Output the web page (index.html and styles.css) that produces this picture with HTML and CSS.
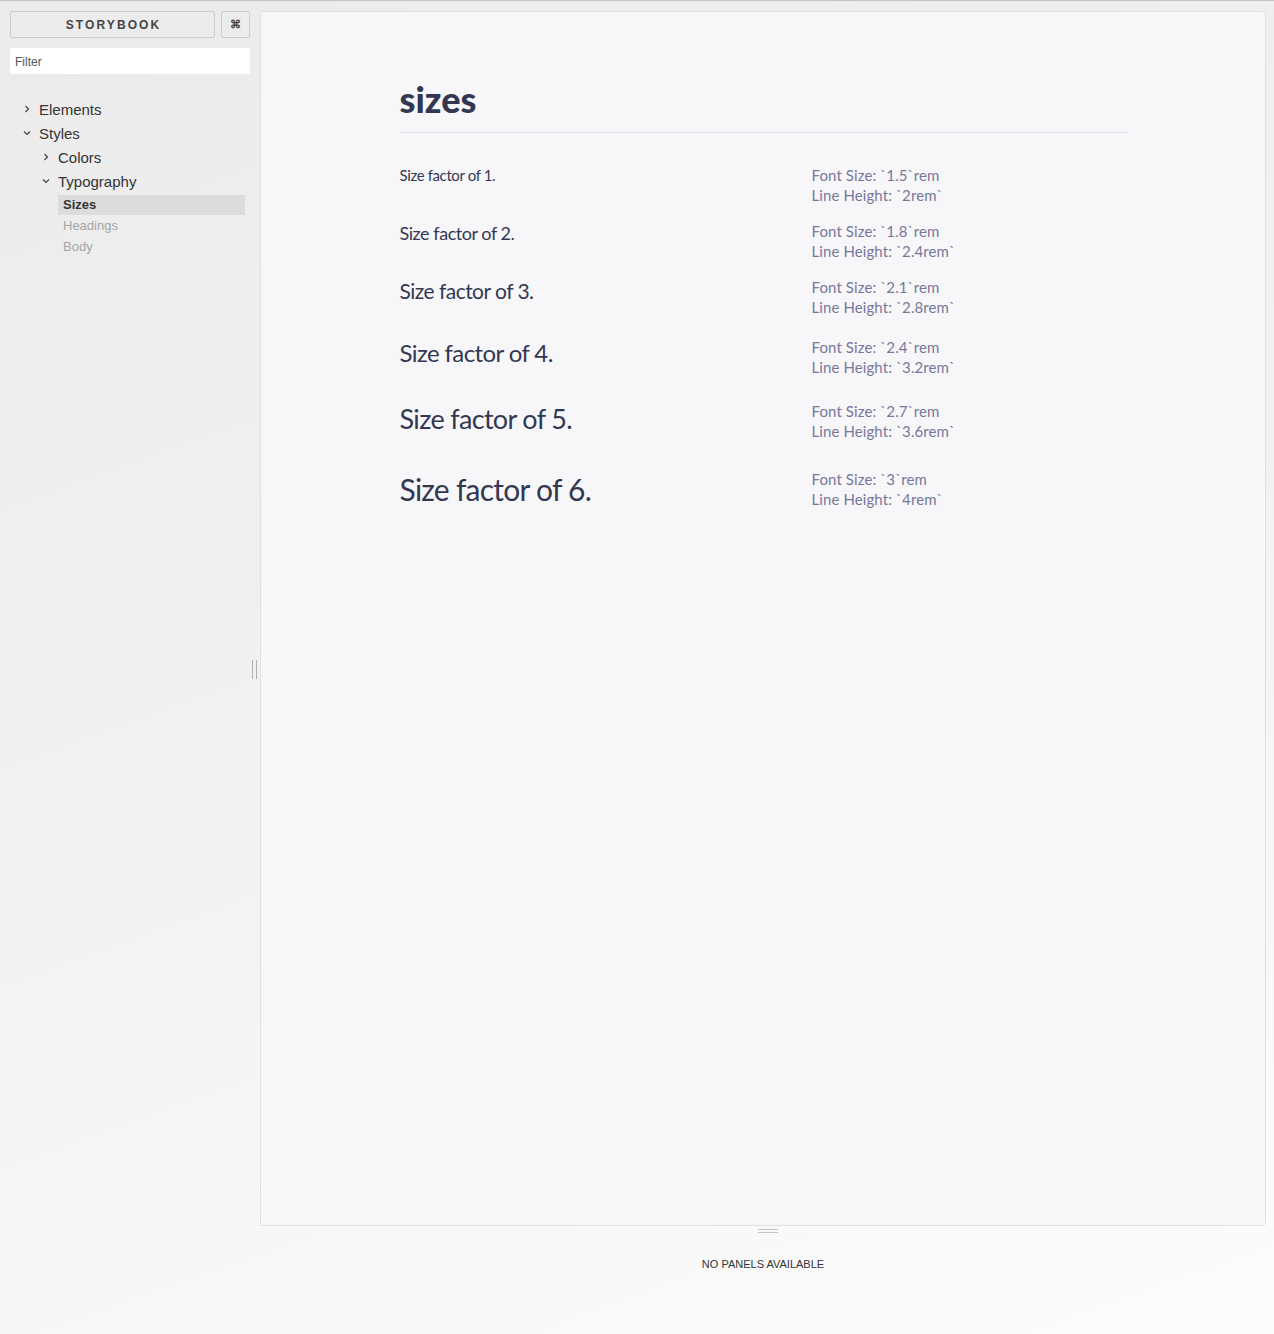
FILE: index.html
```html
<!DOCTYPE html>
<html lang="en">
<head>
  <meta charset="UTF-8">
  <title>Storybook</title>
  <link rel="stylesheet" href="styles.css">
</head>
<body>
  <div class="app">
    <aside class="sidebar">
      <div class="header">
        <button class="brand">STORYBOOK</button>
        <button class="shortcuts">⌘</button>
      </div>
      <input class="filter" type="text" placeholder="Filter">

      <ul class="tree">
        <li class="node">
          <svg class="chev" viewBox="0 0 8 8"><polyline points="2.5,1 5.5,4 2.5,7"/></svg>
          <span>Elements</span>
        </li>
        <li class="node">
          <svg class="chev" viewBox="0 0 8 8"><polyline points="1,2.5 4,5.5 7,2.5"/></svg>
          <span>Styles</span>
        </li>
        <li class="node level-2">
          <svg class="chev" viewBox="0 0 8 8"><polyline points="2.5,1 5.5,4 2.5,7"/></svg>
          <span>Colors</span>
        </li>
        <li class="node level-2">
          <svg class="chev" viewBox="0 0 8 8"><polyline points="1,2.5 4,5.5 7,2.5"/></svg>
          <span>Typography</span>
        </li>
        <li class="story active">Sizes</li>
        <li class="story">Headings</li>
        <li class="story">Body</li>
      </ul>
      <div class="v-handle"></div>
    </aside>

    <main class="main">
      <div class="preview">
        <div class="content">
          <h1>sizes</h1>
          <div class="size-row">
            <div class="sample s1">Size factor of 1.</div>
            <div class="meta">Font Size: `1.5`rem<br>Line Height: `2rem`</div>
          </div>
          <div class="size-row">
            <div class="sample s2">Size factor of 2.</div>
            <div class="meta">Font Size: `1.8`rem<br>Line Height: `2.4rem`</div>
          </div>
          <div class="size-row">
            <div class="sample s3">Size factor of 3.</div>
            <div class="meta">Font Size: `2.1`rem<br>Line Height: `2.8rem`</div>
          </div>
          <div class="size-row">
            <div class="sample s4">Size factor of 4.</div>
            <div class="meta">Font Size: `2.4`rem<br>Line Height: `3.2rem`</div>
          </div>
          <div class="size-row">
            <div class="sample s5">Size factor of 5.</div>
            <div class="meta">Font Size: `2.7`rem<br>Line Height: `3.6rem`</div>
          </div>
          <div class="size-row">
            <div class="sample s6">Size factor of 6.</div>
            <div class="meta">Font Size: `3`rem<br>Line Height: `4rem`</div>
          </div>
        </div>
      </div>
      <div class="addons">
        <div class="h-handle"></div>
        <p>NO PANELS AVAILABLE</p>
      </div>
    </main>
  </div>
</body>
</html>
```

FILE: styles.css
```css
/* Layout */
html, body {
  margin: 0;
  padding: 0;
}

body {
  height: 1334px;
  border-top: 1px solid #c4c4c4;
  box-sizing: border-box;
  background: linear-gradient(160deg, #ebebeb, #f2f2f2 50%, #fcfcfc);
  font-family: "Liberation Sans", Arial, sans-serif;
  color: #333;
  overflow: hidden;
}

.app {
  display: flex;
  height: 100%;
}

/* Sidebar */
.sidebar {
  position: relative;
  width: 240px;
  padding: 10px 10px 0;
  flex-shrink: 0;
}

.header {
  display: flex;
  gap: 6px;
}

.header button {
  height: 27px;
  background: transparent;
  border: 1px solid #cdcdcd;
  border-radius: 2px;
  font-family: "Liberation Sans", Arial, sans-serif;
  color: #444;
  padding: 0;
}

.brand {
  width: 205px;
  font-size: 12px;
  font-weight: bold;
  letter-spacing: 2.1px;
  padding-left: 2px !important;
}

.shortcuts {
  width: 29px;
  font-size: 11px;
  font-weight: bold;
}

.filter {
  display: block;
  width: 100%;
  box-sizing: border-box;
  margin-top: 10px;
  height: 26px;
  border: none;
  border-radius: 2px;
  background: #fff;
  padding: 2px 5px 0;
  font-family: "Liberation Sans", Arial, sans-serif;
  font-size: 12px;
  color: #333;
  outline: none;
}

.filter::placeholder {
  color: #555;
}

.tree {
  list-style: none;
  margin: 23px 0 0;
  padding: 0;
}

.node {
  display: flex;
  align-items: center;
  height: 24px;
  font-size: 15px;
  color: #333;
  padding-left: 13px;
}

.node.level-2 {
  padding-left: 32px;
}

.chev {
  width: 8px;
  height: 8px;
  margin-right: 8px;
  fill: none;
  stroke: #444;
  stroke-width: 1.2;
}

.story {
  margin-left: 48px;
  margin-right: 5px;
  height: 21px;
  line-height: 21px;
  padding-left: 5px;
  font-size: 13px;
  color: #a5a5a5;
}

.story.active {
  margin-top: 2px;
  height: 20px;
  line-height: 20px;
  background: #dcdcdc;
  color: #333;
  font-weight: bold;
}

.v-handle {
  position: absolute;
  top: 659px;
  right: 3px;
  width: 3px;
  height: 19px;
  border-left: 1px solid #b0b0b0;
  border-right: 1px solid #b0b0b0;
}

/* Main area */
.main {
  flex: 1;
  display: flex;
  flex-direction: column;
  padding-right: 8px;
}

.preview {
  margin-top: 10px;
  height: 1213px;
  background: #f7f7f9;
  border: 1px solid #e1e1e1;
  border-radius: 0 4px 4px 0;
  font-family: Lato, "Open Sans", sans-serif;
}

.content {
  width: 727px;
  margin: 0 auto;
  padding-top: 67px;
}

.content h1 {
  margin: 0;
  padding-bottom: 13px;
  font-size: 36px;
  line-height: 40px;
  font-weight: 900;
  color: #333752;
  border-bottom: 1px solid #e3e3ed;
  margin-bottom: 32px;
}

.size-row {
  display: grid;
  grid-template-columns: 412px 1fr;
  align-items: start;
}

.sample {
  color: #333752;
  padding-bottom: 32px;
  letter-spacing: -0.025em;
}

.s1 { font-size: 15px; line-height: 20px; }
.s2 { font-size: 18px; line-height: 24px; }
.s3 { font-size: 21px; line-height: 28px; }
.s4 { font-size: 24px; line-height: 32px; }
.s5 { font-size: 27px; line-height: 36px; }
.s6 { font-size: 30px; line-height: 40px; }

.meta {
  font-size: 15px;
  line-height: 20px;
  color: #77779b;
  padding-bottom: 16px;
  letter-spacing: 0.1px;
}

/* Addons panel */
.addons {
  flex: 1;
  display: flex;
  flex-direction: column;
  align-items: center;
}

.h-handle {
  margin: 3px 0 0 10px;
  width: 20px;
  height: 2px;
  border-top: 1px solid #c4c4c4;
  border-bottom: 1px solid #c4c4c4;
}

.addons p {
  margin: 25px 0 0;
  font-size: 11px;
  color: #333;
}
```
